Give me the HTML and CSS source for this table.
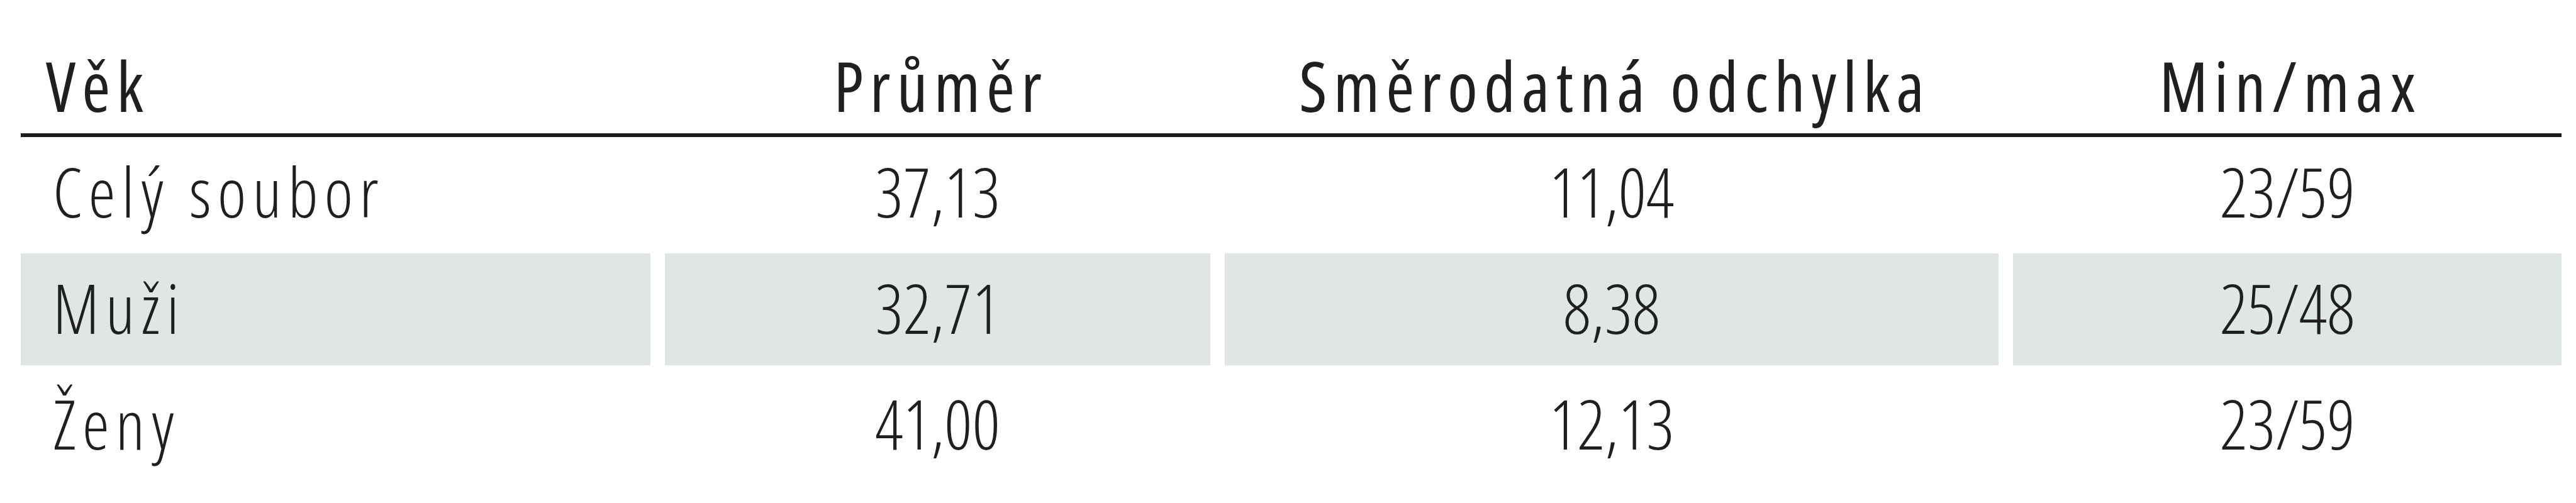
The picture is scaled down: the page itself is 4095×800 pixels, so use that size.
FILE: index.html
```html
<!DOCTYPE html>
<html lang="cs">
<head>
<meta charset="utf-8">
<title>Věk</title>
<link rel="stylesheet" href="styles.css">
</head>
<body>
<div class="table">
  <div class="row head">
    <div class="cell first">Věk</div>
    <div class="cell">Průměr</div>
    <div class="cell">Směrodatná odchylka</div>
    <div class="cell">Min/max</div>
  </div>
  <div class="row body">
    <div class="cell first">Celý soubor</div>
    <div class="cell num">37,13</div>
    <div class="cell num">11,04</div>
    <div class="cell num">23/59</div>
  </div>
  <div class="row body shaded">
    <div class="cell first">Muži</div>
    <div class="cell num">32,71</div>
    <div class="cell num">8,38</div>
    <div class="cell num">25/48</div>
  </div>
  <div class="row body">
    <div class="cell first">Ženy</div>
    <div class="cell num">41,00</div>
    <div class="cell num">12,13</div>
    <div class="cell num">23/59</div>
  </div>
</div>
</body>
</html>
```
FILE: styles.css
```css
html, body {
  margin: 0;
  padding: 0;
  background: #ffffff;
}

body {
  font-family: "Open Sans", "Noto Sans", sans-serif;
  font-stretch: semi-condensed;
  font-size: 109px;
  color: #1f1f1f;
}

.table {
  width: 4039px;
  margin-left: 33px;
  display: flex;
  flex-direction: column;
  row-gap: 6px;
}

.row {
  display: grid;
  grid-template-columns: 1001px 867px 1230px 872px;
  column-gap: 23px;
}

.cell {
  text-align: center;
  white-space: nowrap;
  line-height: 148px;
  letter-spacing: 10px;
}

.head {
  padding-top: 62px;
  padding-bottom: 2px;
  border-bottom: 6px solid #1c1c1c;
  margin-bottom: -6px;
  font-weight: 400;
}

.head .cell {
  padding-left: 10px;
}

.head .first {
  text-align: left;
  padding-left: 40px;
}

.body {
  font-weight: 300;
}

.body .cell {
  height: 178px;
  box-sizing: border-box;
  padding-bottom: 7px;
  display: flex;
  align-items: center;
  justify-content: center;
}

.body .num {
  letter-spacing: 0;
}

.body .first {
  justify-content: flex-start;
  padding-left: 51px;
}

.body:nth-child(2) .cell {
  height: 179px;
}

.shaded .cell {
  background: #dfe6e4;
}
```
